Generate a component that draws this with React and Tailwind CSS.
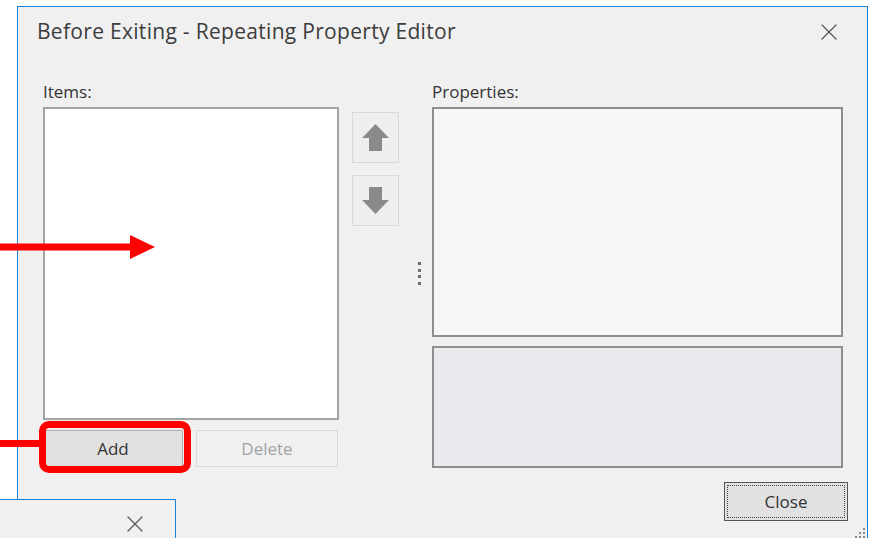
import { X } from "lucide-react";

const font = { fontFamily: '"Open Sans", "Noto Sans", sans-serif' };

function ArrowButton({ down }) {
  return (
    <button className="w-[47px] h-[51px] border border-[#d9d9d9] bg-[#efefef] flex items-center justify-center">
      <svg width="27" height="27" viewBox="0 0 27 27" className={down ? "rotate-180" : ""}>
        <path d="M13.5 0 L27 14 L20 14 L20 27 L7 27 L7 14 L0 14 Z" fill="#8a8a8a" />
      </svg>
    </button>
  );
}

function Grip() {
  return (
    <svg width="12" height="12" viewBox="0 0 12 12">
      {[
        [9, 1], [9, 5], [5, 5], [9, 9], [5, 9], [1, 9],
      ].map(([x, y]) => (
        <rect key={`${x}-${y}`} x={x} y={y} width="2" height="2" fill="#8a8a8a" />
      ))}
    </svg>
  );
}

export default function App() {
  return (
    <div className="relative w-[870px] h-[538px] overflow-hidden bg-white text-[#333]" style={font}>
      {/* Repeating property editor dialog */}
      <div className="relative ml-[17px] mt-[6px] w-[851px] h-[535px] border border-[#1883d7] bg-[#f0f0f0]">
        <div className="h-[50px] flex items-center justify-between pl-[19px] pr-[24px]">
          <span className="text-[21px] tracking-[0.3px] text-[#3c3c3c]">Before Exiting - Repeating Property Editor</span>
          <X className="w-[28px] h-[28px] text-[#555]" strokeWidth={1.05} />
        </div>

        <div className="flex pl-[25px] pt-[25px]">
          {/* Items list */}
          <div className="w-[296px] flex flex-col">
            <div className="text-[17px] leading-[20px] mb-[5px]">Items:</div>
            <div className="h-[313px] border-2 border-[#a3a3a3] bg-white" />
            <div className="flex gap-[13px] mt-[10px]">
              <button className="w-[140px] h-[37px] border border-[#adadad] bg-[#e1e1e1] text-[17px] text-[#333]">
                Add
              </button>
              <button className="w-[142px] h-[37px] border border-[#d9d9d9] bg-[#f0f0f0] text-[17px] text-[#a3a3a3]">
                Delete
              </button>
            </div>
          </div>

          {/* Move up / down */}
          <div className="ml-[13px] pt-[30px] flex flex-col gap-[12px]">
            <ArrowButton />
            <ArrowButton down />
          </div>

          {/* Splitter */}
          <div className="ml-[19px] pt-[180px] flex flex-col gap-[3.5px]">
            {[0, 1, 2, 3].map((i) => (
              <div key={i} className="w-[3px] h-[3px] bg-[#6e6e6e]" />
            ))}
          </div>

          {/* Properties */}
          <div className="ml-[11px] w-[411px] flex flex-col">
            <div className="text-[17px] leading-[20px] mb-[5px]">Properties:</div>
            <div className="h-[230px] border-2 border-[#8e8e8e] bg-[#f7f7f9]" />
            <div className="h-[122px] mt-[9px] border-2 border-[#8e8e8e] bg-[#e9eaee]" />
          </div>
        </div>

        <div className="flex justify-end pr-[19px] mt-[14px]">
          <button className="w-[124px] h-[39px] border border-[#555] bg-[#e1e1e1] p-[2px]">
            <div className="w-full h-full border border-dotted border-[#444] flex items-center justify-center text-[17px] text-[#333]">
              Close
            </div>
          </button>
        </div>

        <div className="absolute right-[1px] bottom-[1px]">
          <Grip />
        </div>
      </div>

      {/* Second window peeking at the bottom */}
      <div className="absolute left-0 top-[499px] w-[176px] h-[60px] border-t border-r border-[#1883d7] bg-[#f0f0f0] flex justify-end pr-[26px] pt-[10px]">
        <X className="w-[28px] h-[28px] text-[#555]" strokeWidth={1.05} />
      </div>

      {/* Callouts */}
      <svg className="absolute left-0 top-[234px]" width="156" height="26" viewBox="0 0 156 26">
        <rect x="0" y="9.5" width="132" height="7" fill="#ff0000" />
        <polygon points="130,1 155,13 130,25" fill="#ff0000" />
      </svg>
      <div className="absolute left-0 top-[440px] w-[42px] h-[7px] bg-[#ff0000]" />
      <div className="absolute left-[39px] top-[421px] w-[152px] h-[52px] border-[7px] border-[#ff0000] rounded-[10px]" />
    </div>
  );
}
